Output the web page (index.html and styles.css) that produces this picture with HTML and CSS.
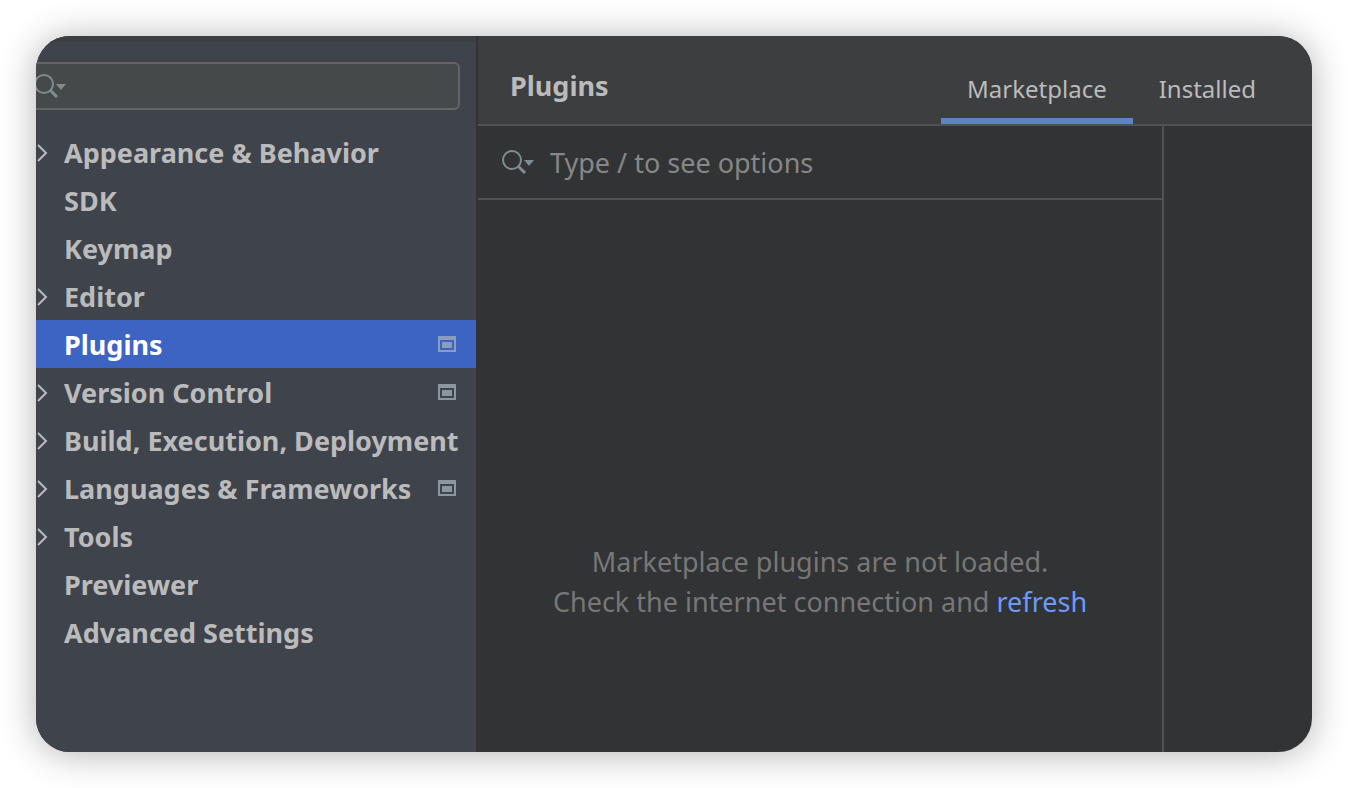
FILE: index.html
```html
<!DOCTYPE html>
<html lang="en">
<head>
<meta charset="utf-8">
<title>Plugins</title>
<link rel="stylesheet" href="styles.css">
</head>
<body>
<svg class="defs" aria-hidden="true">
  <symbol id="lens" viewBox="0 0 34 28">
    <circle cx="12" cy="12" r="9" fill="none" stroke="currentColor" stroke-width="2"/>
    <path d="M18 18l7 7" fill="none" stroke="currentColor" stroke-width="3"/>
    <path d="M24 12h10l-5 6z" fill="currentColor"/>
  </symbol>
  <symbol id="chevron" viewBox="0 0 12 20">
    <path d="M2 3l8 8-8 8" fill="none" stroke="currentColor" stroke-width="2"/>
  </symbol>
  <symbol id="project" viewBox="0 0 18 16">
    <path fill="currentColor" fill-rule="evenodd" d="M0 0h18v16H0zM2 4v10h14V4zM4 6h10v6H4z"/>
  </symbol>
</svg>
<div class="window">
  <aside class="sidebar">
    <label class="filter">
      <svg class="lens"><use href="#lens"/></svg>
      <input class="field" type="text" aria-label="Search settings">
    </label>
    <nav class="tree">
      <a class="row" href="#"><svg class="chevron"><use href="#chevron"/></svg><span class="name">Appearance &amp; Behavior</span></a>
      <a class="row" href="#"><span class="name">SDK</span></a>
      <a class="row" href="#"><span class="name">Keymap</span></a>
      <a class="row" href="#"><svg class="chevron"><use href="#chevron"/></svg><span class="name">Editor</span></a>
      <a class="row selected" href="#" aria-current="page"><span class="name">Plugins</span><svg class="project"><use href="#project"/></svg></a>
      <a class="row" href="#"><svg class="chevron"><use href="#chevron"/></svg><span class="name">Version Control</span><svg class="project"><use href="#project"/></svg></a>
      <a class="row" href="#"><svg class="chevron"><use href="#chevron"/></svg><span class="name">Build, Execution, Deployment</span></a>
      <a class="row" href="#"><svg class="chevron"><use href="#chevron"/></svg><span class="name">Languages &amp; Frameworks</span><svg class="project"><use href="#project"/></svg></a>
      <a class="row" href="#"><svg class="chevron"><use href="#chevron"/></svg><span class="name">Tools</span></a>
      <a class="row" href="#"><span class="name">Previewer</span></a>
      <a class="row" href="#"><span class="name">Advanced Settings</span></a>
    </nav>
  </aside>
  <main class="main">
    <header class="header">
      <h1 class="title">Plugins</h1>
      <div class="tabs" role="tablist">
        <button class="tab active" role="tab" aria-selected="true">Marketplace</button>
        <button class="tab" role="tab" aria-selected="false">Installed</button>
      </div>
    </header>
    <div class="content">
      <section class="list">
        <label class="search">
          <svg class="lens"><use href="#lens"/></svg>
          <input class="field" type="text" placeholder="Type / to see options" aria-label="Search plugins">
        </label>
        <div class="empty">
          <p class="message">Marketplace plugins are not loaded.<br>Check the internet connection and <a class="link" href="#">refresh</a></p>
        </div>
      </section>
      <section class="details" aria-label="Plugin details"></section>
    </div>
  </main>
</div>
</body>
</html>
```
FILE: styles.css
```css
* {
  box-sizing: border-box;
}

body {
  display: flex;
  min-height: 100vh;
  margin: 0;
  padding: 36px;
  background: #fff;
  color: #bbb;
  font-family: "Noto Sans", "Open Sans", sans-serif;
  font-size: 27px;
}

.defs {
  position: absolute;
  width: 0;
  height: 0;
}

.window {
  display: flex;
  flex: 1;
  overflow: hidden;
  border-radius: 34px;
  background: #323335;
  box-shadow: 0 2px 36px rgba(0, 0, 0, 0.3);
}

.sidebar {
  flex: 0 0 440px;
  min-width: 0;
  padding-top: 20px;
  border-top: 6px solid #3c3f41;
  background: #3f434c;
}

.filter {
  display: flex;
  align-items: center;
  height: 48px;
  margin-right: 16px;
  border: 2px solid #646464;
  border-left: 0;
  border-radius: 0 6px 6px 0;
  background: #45494a;
}

.lens {
  flex: none;
  width: 34px;
  height: 28px;
  color: #7f8b91;
}

.filter .lens {
  margin-left: -4px;
}

.field {
  flex: 1;
  min-width: 0;
  padding: 0;
  border: 0;
  outline: 0;
  background: none;
  color: #bbb;
  font: inherit;
}

.field::placeholder {
  color: #878787;
  opacity: 1;
}

.tree {
  margin-top: 18px;
}

.row {
  display: grid;
  grid-template-columns: 28px 1fr auto;
  align-items: center;
  height: 48px;
  padding-right: 16px;
  color: #bbb;
  font-weight: 700;
  text-decoration: none;
  white-space: nowrap;
}

.selected {
  background: #3d64c2;
  color: #fff;
}

.chevron {
  width: 12px;
  height: 20px;
}

.name {
  grid-column: 2;
}

.project {
  width: 18px;
  height: 16px;
  margin-right: 4px;
  color: #8a979f;
}

.selected .project {
  color: #8b9dbd;
}

.main {
  display: flex;
  flex: 1;
  flex-direction: column;
  min-width: 0;
  border-left: 2px solid #323232;
}

.header {
  display: flex;
  justify-content: space-between;
  height: 90px;
  padding-right: 30px;
  padding-left: 32px;
  border-bottom: 2px solid #515253;
  background: #3d3e40;
}

.title {
  margin: 0;
  font-size: 27px;
  line-height: 100px;
}

.tabs {
  display: flex;
}

.tab {
  padding: 22px 26px 0;
  border: 0;
  border-bottom: 6px solid transparent;
  background: none;
  color: #bbb;
  font-family: inherit;
  font-size: 24px;
}

.active {
  border-bottom-color: #5a86c5;
}

.content {
  display: flex;
  flex: 1;
}

.list {
  display: flex;
  flex: 1;
  flex-direction: column;
}

.search {
  display: flex;
  align-items: center;
  gap: 16px;
  height: 74px;
  padding-left: 22px;
  border-bottom: 2px solid #515253;
}

.empty {
  display: grid;
  flex: 1;
  place-items: center;
  padding-top: 212px;
}

.message {
  margin: 0;
  color: #777;
  line-height: 40px;
  text-align: center;
}

.link {
  color: #6b9bfa;
  text-decoration: none;
}

.details {
  flex: 0 0 150px;
  border-left: 2px solid #515253;
}
```
